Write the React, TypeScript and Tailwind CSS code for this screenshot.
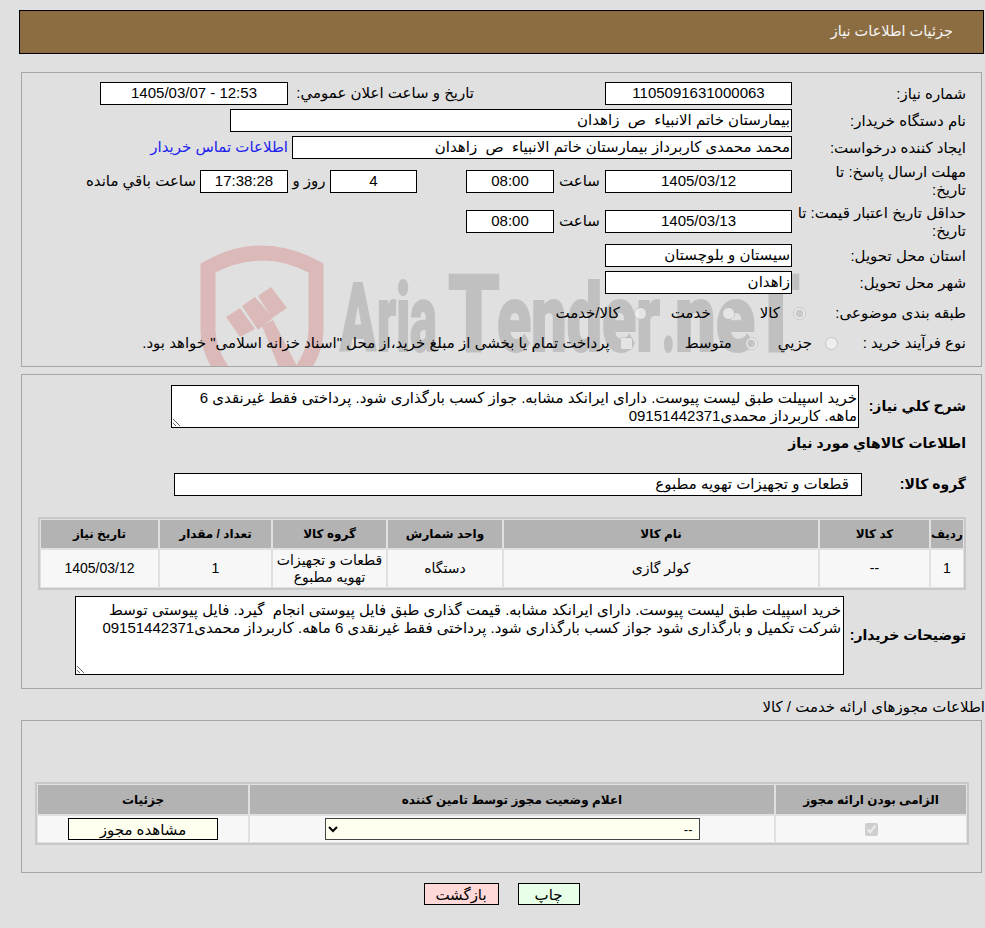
import type { ReactNode } from 'react'

const sharhKoli =
  'خرید اسپیلت طبق لیست پیوست. دارای ایرانکد مشابه. جواز کسب بارگذاری شود. پرداختی فقط غیرنقدی 6 ماهه. کاربرداز محمدی09151442371'
const tozihat =
  'خرید اسپیلت طبق لیست پیوست. دارای ایرانکد مشابه. قیمت گذاری طبق فایل پیوستی انجام  گیرد. فایل پیوستی توسط شرکت تکمیل و بارگذاری شود جواز کسب بارگذاری شود. پرداختی فقط غیرنقدی 6 ماهه. کاربرداز محمدی09151442371'

function Box({ className = '', children }: { className?: string; children?: ReactNode }) {
  return (
    <div className={`flex h-[23px] shrink-0 items-center justify-center whitespace-pre border border-black bg-white ${className}`}>
      {children}
    </div>
  )
}

function Row({
  label,
  className = 'h-[23px] mt-1',
  labelClass = 'w-[174px]',
  children,
}: {
  label: ReactNode
  className?: string
  labelClass?: string
  children?: ReactNode
}) {
  return (
    <div className={`flex items-center ${className}`}>
      <div className={`shrink-0 leading-[18px] ${labelClass}`}>{label}</div>
      {children}
    </div>
  )
}

function Watermark() {
  return (
    <svg className="absolute left-0 top-0 h-full w-full [direction:ltr]" viewBox="22 73 959 293" aria-hidden="true">
      <path
        d="M208 268 Q262 238 316 268 L316 330 Q316 368 262 412 Q208 368 208 330 Z"
        fill="none"
        stroke="#dbb9b9"
        strokeWidth="15"
      />
      <g fill="#dbb9b9">
        <path d="M226 317 L240 308 L255 329 L240 337 Z" />
        <path d="M242 306 L255 297 L273 318 L258 330 Z" />
        <path d="M258 296 L271 287 L287 308 L272 318 Z" />
        <path d="M262 326 L273 320 L300 372 L284 380 Z" />
      </g>
      <g fill="#c0c0c0" stroke="#c0c0c0" strokeWidth="2" className="font-['Roboto'] font-black">
        <text x="340" y="351" fontSize="94" textLength="36" lengthAdjust="spacingAndGlyphs">A</text>
        <text x="377" y="351" fontSize="94" textLength="60" lengthAdjust="spacingAndGlyphs">ria</text>
        <text x="448" y="351" fontSize="108" textLength="52" lengthAdjust="spacingAndGlyphs">T</text>
        <text x="497" y="351" fontSize="94" textLength="163" lengthAdjust="spacingAndGlyphs">ender</text>
        <text x="662" y="351" fontSize="94" textLength="13" lengthAdjust="spacingAndGlyphs">.</text>
        <text x="675" y="351" fontSize="94" textLength="80" lengthAdjust="spacingAndGlyphs">ne</text>
        <text x="752" y="351" fontSize="108" textLength="48" lengthAdjust="spacingAndGlyphs">T</text>
      </g>
    </svg>
  )
}

const kalaHead = ['ردیف', 'کد کالا', 'نام کالا', 'واحد شمارش', 'گروه کالا', 'تعداد / مقدار', 'تاریخ نیاز']

function KalaTable() {
  return (
    <div className="ml-[16px] mr-[15px] mt-[21px] grid grid-cols-[32px_109px_314px_114px_113px_111px_117px] grid-rows-[28px_37px] gap-[2px] border-2 border-[#c8c8c8] p-px text-[14px]">
      {kalaHead.map((h) => (
        <div key={h} className="flex items-center justify-center bg-[#b3b3b3] text-[12px] font-bold">
          {h}
        </div>
      ))}
      <div className="flex items-center justify-center bg-[#f7f7f7]">1</div>
      <div className="flex items-center justify-center bg-[#f7f7f7]">--</div>
      <div className="flex items-center justify-center bg-[#f7f7f7]">کولر گازی</div>
      <div className="flex items-center justify-center bg-[#f7f7f7]">دستگاه</div>
      <div className="flex items-center justify-center bg-[#f7f7f7] text-center leading-[17px]">
        قطعات و تجهیزات
        <br />
        تهویه مطبوع
      </div>
      <div className="flex items-center justify-center bg-[#f7f7f7]">1</div>
      <div className="flex items-center justify-center bg-[#f7f7f7]">1405/03/12</div>
    </div>
  )
}

export default function App() {
  return (
    <div dir="rtl" className="min-h-[928px] overflow-hidden bg-[#e0e0e0] pt-[10px] font-['Liberation_Sans','DejaVu_Sans',sans-serif] text-[15px] text-black">
      <div className="ml-[19px] mr-px flex h-[44px] items-center border border-black bg-[#8c6d42] pr-[30px] text-[14.5px] text-[#f5f5f5]">
        جزئیات اطلاعات نیاز
      </div>

      <div className="relative ml-[21px] mr-[3px] mt-[18px] h-[295px] overflow-hidden border border-[#a6a6a6] pr-[15px] pt-[9px]">
        <Watermark />
        <div className="relative">
          <Row label="شماره نیاز:" className="h-[23px]">
            <Box className="w-[187px]">1105091631000063</Box>
            <div className="mr-[131px] w-[186px] whitespace-nowrap">تاریخ و ساعت اعلان عمومي:</div>
            <Box className="w-[188px]">12:53 - 1405/03/07</Box>
          </Row>
          <Row label="نام دستگاه خریدار:">
            <Box className="w-[562px] justify-start px-px">بیمارستان خاتم الانبیاء  ص  زاهدان</Box>
          </Row>
          <Row label="ایجاد کننده درخواست:">
            <Box className="w-[500px] justify-start px-px">محمد محمدی کاربرداز بیمارستان خاتم الانبیاء  ص  زاهدان</Box>
            <a href="#" className="mr-1 whitespace-nowrap text-[#2222ee]">اطلاعات تماس خریدار</a>
          </Row>
          <Row
            label={
              <>
                مهلت ارسال پاسخ: تا
                <br />
                تاریخ:
              </>
            }
            className="mt-1 h-9"
          >
            <Box className="w-[187px]">1405/03/12</Box>
            <div className="w-[51px] text-center">ساعت</div>
            <Box className="w-[88px]">08:00</Box>
            <div className="w-[49px]" />
            <Box className="w-[87px]">4</Box>
            <div className="w-[42px] text-center">روز و</div>
            <Box className="w-[88px] bg-[#fffff0]">17:38:28</Box>
            <div className="mr-1 whitespace-nowrap">ساعت باقي مانده</div>
          </Row>
          <Row label="حداقل تاریخ اعتبار قیمت: تا تاریخ:" className="mt-[3px] h-[39px]">
            <Box className="w-[187px]">1405/03/13</Box>
            <div className="w-[51px] text-center">ساعت</div>
            <Box className="w-[88px]">08:00</Box>
          </Row>
          <Row label="استان محل تحویل:" className="mt-[3px] h-[23px]">
            <Box className="w-[187px] justify-start px-px">سیستان و بلوچستان</Box>
          </Row>
          <Row label="شهر محل تحویل:">
            <Box className="w-[187px] justify-start px-px">زاهدان</Box>
          </Row>
          <Row label="طبقه بندی موضوعی:" className="mt-1 h-[30px]" labelClass="w-[160px]">
            <input type="radio" disabled defaultChecked className="m-0 size-[13px]" />
            <span className="mr-[13px]">کالا</span>
            <input type="radio" disabled className="m-0 mr-[25px] size-[13px]" />
            <span className="mr-[11px]">خدمت</span>
            <input type="radio" disabled className="m-0 mr-[24px] size-[13px]" />
            <span className="mr-[14px]">کالا/خدمت</span>
          </Row>
          <Row label="نوع فرآیند خرید :" className="h-[30px]" labelClass="w-[128px]">
            <input type="radio" disabled className="m-0 size-[13px]" />
            <span className="mr-[13px]">جزیي</span>
            <input type="radio" disabled defaultChecked className="m-0 mr-[20px] size-[13px]" />
            <span className="mr-[13px]">متوسط</span>
            <input type="checkbox" disabled className="m-0 mr-[52px] size-[13px]" />
            <span className="mr-[10px] whitespace-nowrap">پرداخت تمام یا بخشی از مبلغ خرید،از محل "اسناد خزانه اسلامی" خواهد بود.</span>
          </Row>
        </div>
      </div>

      <div className="ml-[21px] mr-[3px] mt-[7px] h-[315px] border border-[#a6a6a6] pt-[10px]">
        <div className="flex items-center pr-[15px]">
          <div className="w-[107px] shrink-0 whitespace-nowrap text-[14px] font-bold">شرح کلي نیاز:</div>
          <textarea
            readOnly
            dir="rtl"
            defaultValue={sharhKoli}
            className="h-[43px] w-[688px] border border-black bg-white px-px pt-[3px] leading-[18px] outline-none"
          />
        </div>
        <div className="mt-[5px] pr-[15px] text-[14px] font-bold">اطلاعات کالاهاي مورد نیاز</div>
        <div className="mt-[19px] flex items-center pr-[15px]">
          <div className="w-[104px] shrink-0 text-[14px] font-bold">گروه کالا:</div>
          <Box className="w-[688px] justify-start pr-[12px]">قطعات و تجهیزات تهویه مطبوع</Box>
        </div>
        <KalaTable />
        <div className="mt-[6px] flex items-center pr-[15px]">
          <div className="w-[122px] shrink-0 whitespace-nowrap text-[14px] font-bold">توضیحات خریدار:</div>
          <textarea
            readOnly
            dir="rtl"
            defaultValue={tozihat}
            className="h-[79px] w-[769px] border border-black bg-white px-[2px] pt-1 leading-[18px] outline-none"
          />
        </div>
      </div>

      <div className="mt-[6px] h-[23px] leading-[23px]">اطلاعات مجوزهای ارائه خدمت / کالا</div>

      <div className="ml-[21px] mr-[3px] mt-[2px] h-[153px] border border-[#a6a6a6] pt-[61px]">
        <div className="ml-[13px] mr-[12px] grid grid-cols-[190px_524px_210px] grid-rows-[29px_26px] gap-[2px] border-2 border-[#c8c8c8] p-px">
          <div className="flex items-center justify-center bg-[#b3b3b3] text-[12px] font-bold">الزامی بودن ارائه مجوز</div>
          <div className="flex items-center justify-center bg-[#b3b3b3] text-[12px] font-bold">اعلام وضعیت مجوز توسط تامین کننده</div>
          <div className="flex items-center justify-center bg-[#b3b3b3] text-[12px] font-bold">جزئیات</div>
          <div className="flex items-center justify-center bg-[#f7f7f7]">
            <input type="checkbox" disabled defaultChecked className="m-0 size-[13px]" />
          </div>
          <div className="flex items-center justify-center bg-[#f7f7f7]">
            <select className="h-[22px] w-[375px] rounded-none border border-[#444] bg-[#fffff0] px-[2px] text-[13px]">
              <option>--</option>
            </select>
          </div>
          <div className="flex items-center justify-center bg-[#f7f7f7]">
            <button type="button" className="h-[22px] w-[150px] border border-black bg-[#fffff0]">مشاهده مجوز</button>
          </div>
        </div>
      </div>

      <div className="mt-[10px] flex justify-center gap-[19px] pl-[18px]">
        <button type="button" className="h-[22px] w-[62px] border border-black bg-[#e8ffe8]">چاپ</button>
        <button type="button" className="h-[22px] w-[75px] border border-black bg-[#ffd8d8]">بازگشت</button>
      </div>
    </div>
  )
}
